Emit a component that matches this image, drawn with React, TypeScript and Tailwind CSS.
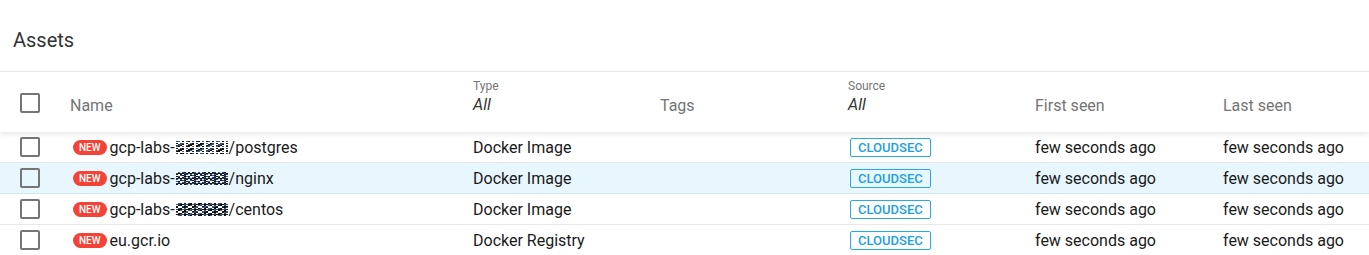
import React from "react";

const cols = "grid grid-cols-[70px_403px_187px_188px_187px_188px_1fr]";

function Box() {
  return <div className="w-[20px] h-[20px] rounded-[2px] border-2 border-[#757575] bg-transparent" />;
}

const rows = [
  { name: "gcp-labs-", suffix: "/postgres", type: "Docker Image", masked: true },
  { name: "gcp-labs-", suffix: "/nginx", type: "Docker Image", masked: true, hl: true },
  { name: "gcp-labs-", suffix: "/centos", type: "Docker Image", masked: true },
  { name: "eu.gcr.io", suffix: "", type: "Docker Registry", masked: false },
];

function Masked({ seed }: { seed: number }) {
  const cells: React.ReactNode[] = [];
  for (let y = 0; y < 13; y++) {
    for (let x = 0; x < 26; x++) {
      const v = (x * 7 + y * 13 + ((x * y + seed) % 5) * 3 + seed) % 5;
      if (v > 2) continue;
      const c = (x + y + seed) % 4 === 0 ? "#1e4a8a" : (x + y) % 4 === 1 ? "#555" : "#111";
      cells.push(<rect key={`${x}-${y}`} x={x * 2} y={y} width="2" height="1" fill={c} />);
    }
  }
  return (
    <svg width="52" height="13" viewBox="0 0 52 13" className="mx-[1px]">
      {cells}
    </svg>
  );
}

export default function App() {
  return (
    <div
      className="w-[1369px] h-[255px] bg-white overflow-hidden"
      style={{ fontFamily: "Roboto, 'Liberation Sans', sans-serif" }}
    >
      <div className="h-[71px] flex items-center pl-[13px] pt-[9px]">
        <h1 className="text-[20px] text-[#333] font-normal">Assets</h1>
      </div>
      <div className={`${cols} h-[61px] border-t border-[#e8e8e8] relative z-10 bg-white shadow-[0_3px_5px_rgba(0,0,0,0.08)] items-center text-[#757575]`}>
        <div className="pl-[20px] pt-[1px]">
          <Box />
        </div>
        <div className="text-[16px] pt-[8px]">Name</div>
        <div className="flex flex-col pb-[10px]">
          <span className="text-[12px] leading-[14px]">Type</span>
          <span className="text-[16px] italic text-[#333] leading-[20px] mt-[2px]">All</span>
        </div>
        <div className="text-[16px] pt-[8px]">Tags</div>
        <div className="flex flex-col pb-[10px]">
          <span className="text-[12px] leading-[14px]">Source</span>
          <span className="text-[16px] italic text-[#333] leading-[20px] mt-[2px]">All</span>
        </div>
        <div className="text-[16px] pt-[8px]">First seen</div>
        <div className="text-[16px] pt-[8px]">Last seen</div>
      </div>
      {rows.map((r, i) => (
        <div
          key={i}
          className={`${cols} h-[31px] items-center border-b ${
            r.hl ? "bg-[#e8f6fd] border-[#d6e6ee]" : "bg-white border-[#e8e8e8]"
          } text-[16px] text-[#1a1a1a]`}
        >
          <div className="pl-[20px]">
            <Box />
          </div>
          <div className="flex items-center pt-[1px]">
            <span className="ml-[3px] mr-[3px] h-[15px] px-[6px] rounded-full bg-[#f44336] text-white text-[10px] font-medium leading-[15px]">
              NEW
            </span>
            <span>{r.name}</span>
            {r.masked && <Masked seed={i} />}
            <span>{r.suffix}</span>
          </div>
          <div className="pt-[1px]">{r.type}</div>
          <div></div>
          <div>
            <span className="ml-[2px] inline-flex items-center h-[19px] px-[7px] rounded-[2px] border border-[#29a8e8] text-[#1ca0e4] text-[13px] font-medium">
              CLOUDSEC
            </span>
          </div>
          <div className="pt-[1px]">few seconds ago</div>
          <div className="pt-[1px]">few seconds ago</div>
        </div>
      ))}
    </div>
  );
}
